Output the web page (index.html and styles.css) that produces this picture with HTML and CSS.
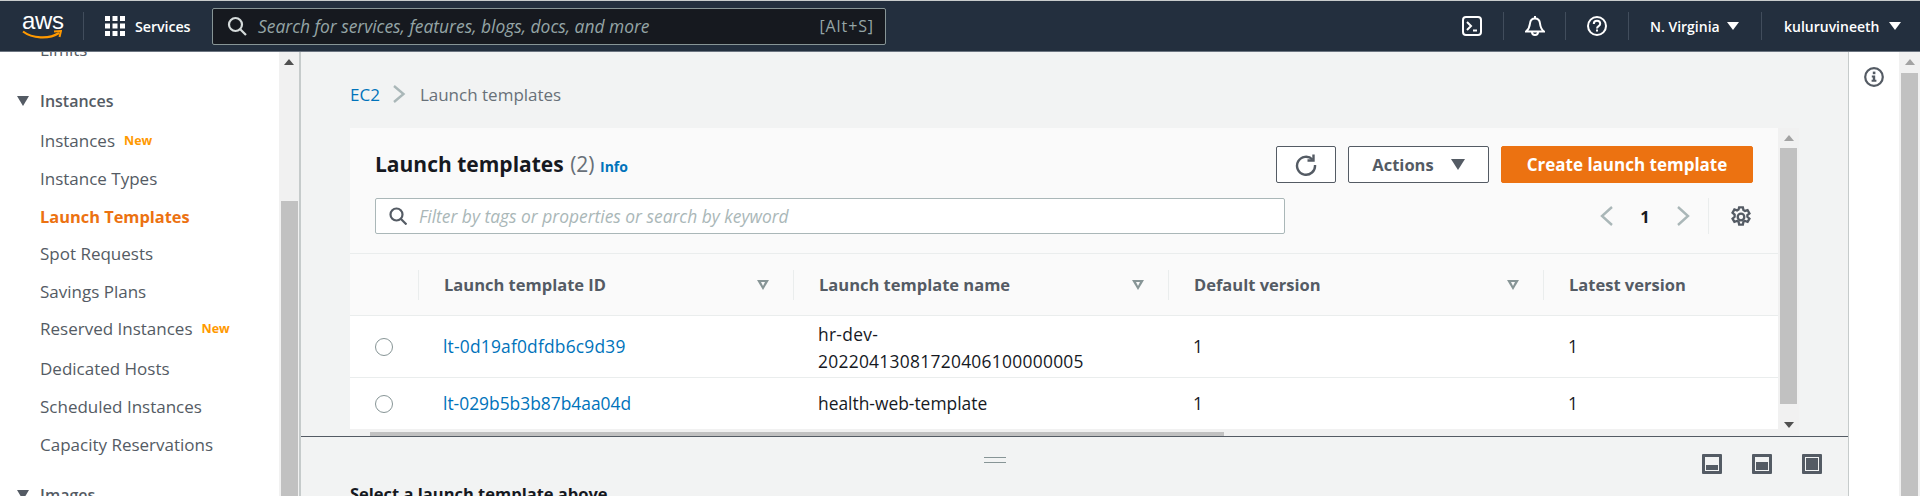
FILE: index.html
```html
<!DOCTYPE html>
<html lang="en">
<head>
<meta charset="utf-8">
<title>Launch templates | EC2</title>
<link rel="stylesheet" href="styles.css">
</head>
<body>
<header class="topbar">
  <div class="logo"><span class="logo-text">aws</span>
    <svg class="smile" width="40" height="10" viewBox="0 0 40 10"><path d="M1 1.500C10 8.500 27 9.500 37 3" fill="none" stroke="#f90" stroke-width="2.200"/><path d="M32 1.500l7-.5-1.500 6" fill="none" stroke="#f90" stroke-width="2"/></svg>
  </div>
  <span class="tb-div d1"></span>
  <svg class="grid-ic" width="20" height="20" viewBox="0 0 20 20" fill="#fff"><rect width="5" height="5"/><rect x="7.500" width="5" height="5"/><rect x="15" width="5" height="5"/><rect y="7.500" width="5" height="5"/><rect x="7.500" y="7.500" width="5" height="5"/><rect x="15" y="7.500" width="5" height="5"/><rect y="15" width="5" height="5"/><rect x="7.500" y="15" width="5" height="5"/><rect x="15" y="15" width="5" height="5"/></svg>
  <span class="services">Services</span>
  <div class="search">
    <svg width="20" height="20" viewBox="0 0 20 20" fill="none" stroke="#d5dbdb" stroke-width="2.200"><circle cx="8.500" cy="8.500" r="6.500"/><path d="M13 13l6 6"/></svg>
    <span class="search-ph">Search for services, features, blogs, docs, and more</span>
    <span class="search-key">[Alt+S]</span>
  </div>
  <svg class="tb-ic term" width="20" height="20" viewBox="0 0 20 20" fill="none" stroke="#fff" stroke-width="2"><rect x="1" y="1" width="18" height="18" rx="3"/><path d="M5 6l4 4-4 4M11 14.500h4"/></svg>
  <span class="tb-div d2"></span>
  <svg class="tb-ic bell" width="20" height="20" viewBox="0 0 20 20" fill="none" stroke="#fff" stroke-width="2"><path d="M1 15.500h18c-2.500-2-3.500-3.500-4-8-.3-3-2.200-5-5-5s-4.700 2-5 5c-.5 4.500-1.500 6-4 8z"/><path d="M10 0v2.500M7 16a3 3 0 0 0 6 0"/></svg>
  <span class="tb-div d3"></span>
  <svg class="tb-ic help" width="20" height="20" viewBox="0 0 20 20" fill="none" stroke="#fff" stroke-width="2"><circle cx="10" cy="10" r="9"/><path d="M6.800 8c0-2 1.400-3.200 3.200-3.200s3.200 1.200 3.200 2.900c0 2.500-3.200 2.300-3.200 4.800"/><path d="M10 13.600v2"/></svg>
  <span class="tb-div d4"></span>
  <span class="tb-label region">N. Virginia</span><span class="tb-caret c1"></span>
  <span class="tb-div d5"></span>
  <span class="tb-label user">kuluruvineeth</span><span class="tb-caret c2"></span>
</header>

<div class="workspace">
  <aside class="side">
    <nav class="nav">
      <a class="nav-item">Limits</a>
      <h3 class="nav-head"><span class="nav-caret"></span>Instances</h3>
      <a class="nav-item">Instances <b class="new">New</b></a>
      <a class="nav-item">Instance Types</a>
      <a class="nav-item active">Launch Templates</a>
      <a class="nav-item">Spot Requests</a>
      <a class="nav-item">Savings Plans</a>
      <a class="nav-item">Reserved Instances <b class="new">New</b></a>
      <a class="nav-item gap-after">Dedicated Hosts</a>
      <a class="nav-item">Scheduled Instances</a>
      <a class="nav-item">Capacity Reservations</a>
      <h3 class="nav-head images"><span class="nav-caret"></span>Images</h3>
    </nav>
    <div class="vbar side-bar"><span class="arrow-up"></span><span class="thumb side-thumb"></span></div>
  </aside>

  <main class="main">
    <div class="upper">
      <div class="content">
        <div class="crumbs">
          <a class="link">EC2</a>
          <svg width="14" height="20" viewBox="0 0 14 20" fill="none" stroke="#aab7b8" stroke-width="2.400"><path d="M2 2l9.500 8L2 18"/></svg>
          <span>Launch templates</span>
        </div>
        <div class="scroller">
          <section class="panel">
            <div class="panel-head">
              <div class="ph-row">
                <h1 class="title">Launch templates <span class="count">(2)</span> <a class="info">Info</a></h1>
                <div class="actions">
                  <button class="btn refresh"><svg width="22" height="22" viewBox="0 0 22 22" fill="none" stroke="#545b64" stroke-width="2.400"><path d="M17.500 5.500A9 9 0 1 0 20 11"/><path d="M18.500 0.500v6h-6"/></svg></button>
                  <button class="btn act">Actions<span class="btn-caret"></span></button>
                  <button class="btn primary">Create launch template</button>
                </div>
              </div>
              <div class="ph-row second">
                <div class="filter">
                  <svg width="18" height="18" viewBox="0 0 18 18" fill="none" stroke="#545b64" stroke-width="2.200"><circle cx="7.500" cy="7.500" r="6"/><path d="M12 12l5.500 5.500"/></svg>
                  <span class="filter-ph">Filter by tags or properties or search by keyword</span>
                </div>
                <div class="pager">
                  <svg width="14" height="22" viewBox="0 0 14 22" fill="none" stroke="#aab7b8" stroke-width="2.400"><path d="M12 2L2 11l10 9"/></svg>
                  <span class="page-no">1</span>
                  <svg width="14" height="22" viewBox="0 0 14 22" fill="none" stroke="#aab7b8" stroke-width="2.400"><path d="M2 2l10 9-10 9"/></svg>
                  <span class="pager-sep"></span>
                  <svg class="gear" width="22" height="22" viewBox="0 0 20 20" fill="none" stroke="#545b64" stroke-width="2.100"><circle cx="10" cy="10" r="3"/><path d="M8.300 1.200h3.400l.5 2.500 1.400.8 2.400-.8 1.700 3-1.900 1.600v1.500l1.900 1.700-1.700 2.900-2.400-.8-1.400.8-.5 2.500H8.300l-.5-2.500-1.400-.8-2.400.8-1.700-2.900 1.900-1.700V7.800L2.300 6.200l1.700-3 2.400.8 1.400-.8z"/></svg>
                </div>
              </div>
            </div>
            <div class="tbl-wrap">
              <div class="tr thead">
                <div class="th"></div>
                <div class="th">Launch template ID<span class="sort"></span></div>
                <div class="th">Launch template name<span class="sort"></span></div>
                <div class="th">Default version<span class="sort"></span></div>
                <div class="th">Latest version</div>
              </div>
              <div class="tr row-a">
                <div class="td"><span class="radio"></span></div>
                <div class="td"><a class="link id-link">lt-0d19af0dfdb6c9d39</a></div>
                <div class="td name long-name">hr-dev-20220413081720406100000005</div>
                <div class="td">1</div>
                <div class="td">1</div>
              </div>
              <div class="tr row-b">
                <div class="td"><span class="radio"></span></div>
                <div class="td"><a class="link">lt-029b5b3b87b4aa04d</a></div>
                <div class="td name">health-web-template</div>
                <div class="td">1</div>
                <div class="td">1</div>
              </div>
            </div>
            <div class="hbar"><span class="hthumb"></span></div>
          </section>
          <div class="vbar panel-bar"><span class="arrow-up"></span><span class="thumb panel-thumb"></span><span class="arrow-down"></span></div>
        </div>
      </div>
    </div>
    <div class="lower">
      <div class="lower-tools">
        <span class="handle"></span>
        <div class="split-icons">
          <span class="split s1"><i></i></span>
          <span class="split s2"><i></i></span>
          <span class="split s3"><i></i></span>
        </div>
      </div>
      <h2 class="select-msg">Select a launch template above</h2>
    </div>
  </main>

  <aside class="rail">
    <svg class="rail-info" width="20" height="20" viewBox="0 0 20 20"><circle cx="10" cy="10" r="8.800" fill="none" stroke="#545b64" stroke-width="2.200"/><rect x="8.800" y="4.600" width="2.600" height="2.600" fill="#545b64"/><path d="M7.800 8.500h3.400v4.200h1.200v2H7.600v-2h1.200v-2.200h-1z" fill="#545b64"/></svg>
  </aside>
  <div class="vbar page-bar"><span class="arrow-up"></span><span class="thumb page-thumb"></span></div>
</div>
</body>
</html>
```
FILE: styles.css
```css
* { box-sizing: border-box; }
html, body { margin: 0; height: 496px; overflow: hidden; }
body { font-family: "Open Sans", "Noto Sans", sans-serif; font-size: 16px; color: #16191f; background: #fff; }
a { text-decoration: none; }
h1, h2, h3 { margin: 0; }

.topbar { height: 52px; background: #232f3e; border-top: 1px solid #c8cccc; border-bottom: 1px solid #6b7480; display: flex; align-items: center; color: #fff; }
.logo { width: 40px; height: 26px; margin-left: 22px; position: relative; flex: none; }
.logo-text { display: block; font-family: "Liberation Sans", sans-serif; font-size: 24px; line-height: 20px; text-align: center; letter-spacing: -.3px; margin-top: -2px; }
.smile { position: absolute; left: 0; top: 17px; }
.tb-div { width: 1px; height: 28px; background: #414d5c; flex: none; }
.d1 { margin-left: 21px; }
.grid-ic { margin-left: 21px; flex: none; }
.services { margin-left: 10px; font-size: 14.300px; font-weight: 600; width: 56px; white-space: nowrap; letter-spacing: -.1px; }
.search { margin-left: 21px; width: 674px; height: 37px; background: #16191f; border: 1px solid #879596; border-radius: 2px; display: flex; align-items: center; padding: 0 11px 0 14px; flex: none; }
.search-ph { margin-left: 11px; font-style: italic; color: #95a5a6; white-space: nowrap; font-size: 17.400px; }
.search-key { margin-left: auto; color: #95a5a6; font-size: 16px; letter-spacing: .9px; }
.tb-ic { flex: none; }
.term { margin-left: 576px; }
.d2 { margin-left: 21px; }
.bell { margin-left: 21px; }
.d3 { margin-left: 20px; }
.help { margin-left: 21px; }
.d4 { margin-left: 21px; }
.tb-label { font-size: 14px; font-weight: 600; white-space: nowrap; }
.region { margin-left: 21px; width: 74px; }
.tb-caret { width: 0; height: 0; border-left: 6px solid transparent; border-right: 6px solid transparent; border-top: 8px solid #fff; flex: none; }
.c1 { margin-left: 3px; }
.d5 { margin-left: 22px; }
.user { margin-left: 22px; width: 98px; }
.c2 { margin-left: 7px; }

.workspace { display: flex; height: 444px; overflow: hidden; }

.side { width: 301px; flex: none; border-right: 2px solid #c6cbcb; display: flex; overflow: hidden; }
.nav { width: 279px; flex: none; margin-top: -21px; padding-left: 40px; color: #545b64; }
.nav-item { display: flex; align-items: center; height: 37.700px; white-space: nowrap; color: #545b64; font-size: 17px; }
.gap-after { margin-top: 2px; }
.active { color: #ec7211; font-weight: 700; font-size: 16.400px; padding-top: 1px; }
.new { margin-left: 9px; font-size: 12.500px; color: #f90; font-weight: 700; }
.nav-head { position: relative; display: flex; align-items: center; height: 38px; margin-top: 13px; font-size: 16px; font-weight: 600; color: #545b64; margin-bottom: 2px; }
.images { margin-top: 13px; }
.nav-caret { position: absolute; left: -23px; width: 0; height: 0; border-left: 6px solid transparent; border-right: 6px solid transparent; border-top: 10px solid #545b64; }

.vbar { position: relative; background: #f1f1f1; flex: none; display: flex; flex-direction: column; align-items: center; }
.arrow-up { width: 0; height: 0; margin-top: 7px; border-left: 5px solid transparent; border-right: 5px solid transparent; border-top: 0; border-bottom: 6px solid #a3a3a3; flex: none; }
.arrow-down { width: 0; height: 0; border-left: 5px solid transparent; border-right: 5px solid transparent; border-top: 6px solid #505050; margin-top: 18px; flex: none; }
.thumb { background: #c1c1c1; width: 17px; flex: none; }
.side-bar { width: 20px; height: 444px; }
.side-bar .arrow-up { border-bottom-color: #505050; }
.side-thumb { margin-top: 136px; height: 300px; }
.page-bar { width: 21px; height: 444px; }
.page-thumb { margin-top: 8px; height: 423px; }

.main { width: 1547px; flex: none; background: #f2f3f3; display: flex; flex-direction: column; }
.upper { height: 385px; border-bottom: 1px solid #545b64; flex: none; padding-left: 49px; overflow: hidden; }
.content { width: 1449px; }
.crumbs { display: flex; align-items: center; height: 24px; margin: 30px 0 22px; color: #687078; font-size: 17px; }
.crumbs svg { margin: 0 14px 0 12px; }
.link { color: #0073bb; }
.scroller { display: flex; height: 309px; }
.panel { width: 1428px; flex: none; background: #fff; display: flex; flex-direction: column; overflow: hidden; }
.panel-head { height: 126px; background: #fafafa; border-bottom: 1px solid #eaeded; padding: 18px 25px 0; flex: none; }
.ph-row { display: flex; align-items: center; justify-content: space-between; height: 37px; }
.second { margin-top: 15px; height: 36px; }
.title { font-size: 21px; font-weight: 700; white-space: nowrap; margin-top: -2px; }
.count { font-weight: 400; color: #687078; margin-left: 1px; }
.info { font-size: 14px; font-weight: 700; color: #0073bb; }
.actions { display: flex; gap: 12px; }
.btn { height: 37px; border: 1px solid #545b64; border-radius: 2px; background: #fff; color: #545b64; font: 700 16.500px "Open Sans", sans-serif; display: flex; align-items: center; justify-content: center; padding: 0; }
.refresh { width: 60px; }
.act { width: 141px; }
.btn-caret { margin-left: 17px; width: 0; height: 0; border-left: 7px solid transparent; border-right: 7px solid transparent; border-top: 11px solid #545b64; }
.primary { width: 252px; background: #ec7211; border-color: #ec7211; color: #fff; font-size: 17px; }
.filter { width: 910px; height: 36px; background: #fff; border: 1px solid #aab7b8; border-radius: 2px; display: flex; align-items: center; padding-left: 13px; }
.filter-ph { margin-left: 12px; font-style: italic; color: #aab7b8; white-space: nowrap; font-size: 17.400px; }
.pager { display: flex; align-items: center; height: 36px; margin-right: 1px; }
.page-no { width: 62px; text-align: center; font-weight: 700; font-size: 16.500px; }
.pager-sep { width: 1px; height: 36px; background: #eaeded; margin-left: 18px; }
.gear { margin-left: 21px; margin-top: 1px; }

.tbl-wrap { flex: none; width: 1568px; }
.tr { display: grid; grid-template-columns: 68px 375px 375px 375px 375px; border-bottom: 1px solid #eaeded; }
.thead { height: 62px; background: #fafafa; align-items: center; }
.row-a { height: 62px; align-items: center; }
.row-b { height: 51px; align-items: center; border-bottom: 0; }
.th { position: relative; height: 30px; display: flex; align-items: center; padding-left: 25px; border-left: 1px solid #eaeded; font-weight: 700; font-size: 16.500px; color: #545b64; white-space: nowrap; }
.th:first-child { border-left: 0; }
.sort { position: absolute; right: 24px; width: 0; height: 0; border-left: 6px solid transparent; border-right: 6px solid transparent; border-top: 10px solid #879596; }
.sort::after { content: ""; position: absolute; left: -2.500px; top: -8px; border-left: 2.500px solid transparent; border-right: 2.500px solid transparent; border-top: 4px solid #fafafa; }
.td { padding-left: 25px; font-size: 17.400px; line-height: 27px; }
.td:first-child { padding-left: 25px; display: flex; align-items: center; }
.name { padding-right: 60px; }
.long-name { letter-spacing: .28px; margin-top: 2px; }
.id-link { letter-spacing: .2px; }
.radio { width: 18px; height: 18px; border: 1px solid #879596; border-radius: 50%; background: #fff; }
.hbar { flex: none; height: 8px; background: #f1f1f1; padding: 3px 0 0 20px; }
.hthumb { display: block; width: 854px; height: 5px; background: #c1c1c1; }
.panel-bar { width: 21px; height: 308px; }
.panel-bar .arrow-up { margin-top: 7px; }
.panel-thumb { margin-top: 7px; height: 256px; }

.lower { flex: 1; padding: 0 0 0 49px; overflow: hidden; }
.lower-tools { display: flex; height: 46px; position: relative; padding-top: 16px; }
.handle { display: block; width: 22px; height: 6px; margin: 4px 0 0 634px; border-top: 1px solid #879596; border-bottom: 1px solid #879596; }
.split-icons { display: flex; gap: 30px; margin-left: 696px; height: 20px; margin-top: 1px; }
.split { width: 20px; height: 20px; border: 3px solid #545b64; border-radius: 1px; background: #f2f3f3; display: flex; align-items: flex-end; padding: 1px; }
.split i { display: block; width: 100%; background: #545b64; }
.s1 i { height: 5px; }
.s2 i { height: 8px; }
.s3 i { height: 12px; }
.select-msg { font-size: 16.500px; font-weight: 700; white-space: nowrap; margin-top: 0; line-height: 22px; }

.rail { width: 51px; flex: none; background: #fff; border-left: 1px solid #c6cbcb; display: flex; justify-content: center; align-items: flex-start; padding-top: 15px; }
```
